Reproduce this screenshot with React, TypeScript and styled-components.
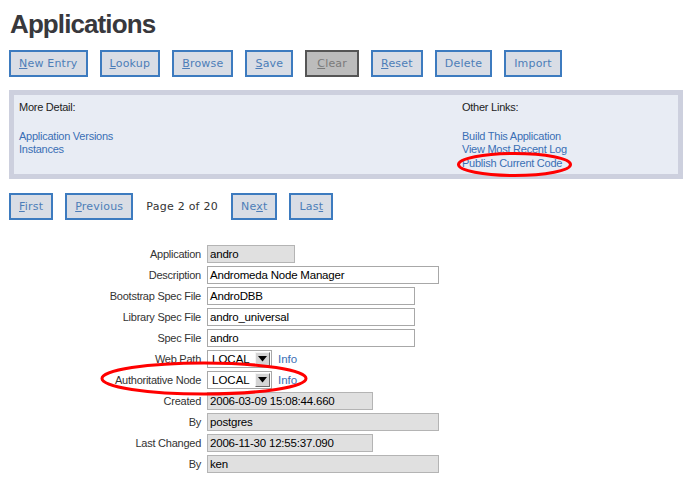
import React from "react";
import styled, { createGlobalStyle } from "styled-components";

const GlobalStyle = createGlobalStyle`
  html, body {
    margin: 0;
    padding: 0;
    background: #ffffff;
  }
  body {
    font-family: "Liberation Sans", Arial, sans-serif;
    color: #333333;
  }
`;

const Page = styled.div`
  position: relative;
  width: 683px;
  height: 493px;
  overflow: hidden;
  padding: 0 0 0 9px;
  box-sizing: border-box;
`;

const Title = styled.h1`
  margin: 0;
  padding: 9px 0 0 1px;
  font-family: "Liberation Sans", Arial, sans-serif;
  font-size: 26px;
  line-height: 30px;
  font-weight: 700;
  letter-spacing: -0.9px;
  color: #38383c;
`;

const ButtonBar = styled.div`
  display: flex;
  gap: 12px;
  margin-top: 11px;
`;

const PagerBar = styled.div`
  display: flex;
  align-items: center;
  gap: 12px;
  margin-top: 14px;
`;

const Button = styled.button<{ $disabled?: boolean }>`
  height: 27px;
  padding: 0 ${({ $disabled }) => ($disabled ? "10px" : "8px")};
  box-sizing: border-box;
  border: 2px solid ${({ $disabled }) => ($disabled ? "#555555" : "#3d7bbf")};
  background: ${({ $disabled }) => ($disabled ? "#bcbcbc" : "#d9dde5")};
  color: ${({ $disabled }) => ($disabled ? "#7a7a7a" : "#4d7db8")};
  font-family: "DejaVu Sans", Verdana, sans-serif;
  font-size: 11px;
  letter-spacing: 0.2px;
  cursor: pointer;
  & u {
    text-decoration: underline;
  }
`;

const PageInfo = styled.span`
  font-family: "DejaVu Sans", Verdana, sans-serif;
  font-size: 11px;
  letter-spacing: 0.25px;
  color: #333333;
  margin: 0 1px;
`;

const Panel = styled.section`
  margin-top: 13px;
  border: 5px solid #cdd0de;
  background: #e8ecf4;
  display: grid;
  grid-template-columns: 443px 1fr;
  padding: 6px 5px;
  height: 89px;
  box-sizing: border-box;
`;

const PanelCol = styled.div`
  display: flex;
  flex-direction: column;
  font-size: 11px;
  letter-spacing: -0.25px;
  line-height: 13.5px;
`;

const PanelHead = styled.div`
  color: #222222;
  margin-bottom: 15px;
`;

const PanelLink = styled.a`
  color: #3a6fb5;
  text-decoration: none;
`;

const Form = styled.div`
  display: grid;
  grid-template-columns: 192px auto;
  column-gap: 6px;
  row-gap: 3px;
  margin-top: 25px;
  align-items: center;
  justify-items: start;
`;

const Label = styled.label`
  justify-self: end;
  font-size: 11px;
  letter-spacing: -0.25px;
  color: #333333;
`;

const Field = styled.div<{ $w: number; $ro?: boolean }>`
  width: ${({ $w }) => $w}px;
  height: 18px;
  box-sizing: border-box;
  border: 1px solid ${({ $ro }) => ($ro ? "#b4b4b4" : "#a8a8a8")};
  background: ${({ $ro }) => ($ro ? "#e0e0e0" : "#ffffff")};
  font-size: 11.5px;
  letter-spacing: -0.2px;
  color: #000000;
  padding: 0 2px;
  line-height: 16px;
  white-space: nowrap;
  overflow: hidden;
`;

const SelectRow = styled.div`
  display: flex;
  align-items: center;
  gap: 6px;
`;

const Select = styled.div`
  width: 65px;
  height: 18px;
  box-sizing: border-box;
  border: 1px solid #a8a8a8;
  background: #ffffff;
  display: flex;
  align-items: center;
  justify-content: space-between;
  font-size: 11.5px;
  color: #000000;
  padding-left: 4px;
`;

const SelectArrow = styled.span`
  width: 15px;
  height: 14px;
  margin-right: 1px;
  box-sizing: border-box;
  background: #d4d4d4;
  border-top: 1px solid #f4f4f4;
  border-left: 1px solid #f4f4f4;
  border-right: 1px solid #6a6a6a;
  border-bottom: 1px solid #6a6a6a;
  display: flex;
  align-items: center;
  justify-content: center;
`;

const InfoLink = styled.a`
  font-size: 11.5px;
  color: #3a6fb5;
  text-decoration: none;
`;

const Marks = styled.svg`
  position: absolute;
  left: 0;
  top: 0;
  pointer-events: none;
`;

const topButtons: { key: string; rest: string; disabled?: boolean }[] = [
  { key: "N", rest: "ew Entry" },
  { key: "L", rest: "ookup" },
  { key: "B", rest: "rowse" },
  { key: "S", rest: "ave" },
  { key: "C", rest: "lear", disabled: true },
  { key: "R", rest: "eset" },
  { key: "", rest: "Delete" },
  { key: "", rest: "Import" },
];

function DropDown({ value }: { value: string }) {
  return (
    <Select>
      <span>{value}</span>
      <SelectArrow>
        <svg width="9" height="6" viewBox="0 0 9 6">
          <path d="M0 0H9L4.5 5.5Z" fill="#000" />
        </svg>
      </SelectArrow>
    </Select>
  );
}

export default function App() {
  return (
    <Page>
      <GlobalStyle />
      <Title>Applications</Title>
      <ButtonBar>
        {topButtons.map((b) => (
          <Button key={b.rest} $disabled={b.disabled}>
            {b.key && <u>{b.key}</u>}
            {b.rest}
          </Button>
        ))}
      </ButtonBar>

      <Panel>
        <PanelCol>
          <PanelHead>More Detail:</PanelHead>
          <PanelLink href="#">Application Versions</PanelLink>
          <PanelLink href="#">Instances</PanelLink>
        </PanelCol>
        <PanelCol>
          <PanelHead>Other Links:</PanelHead>
          <PanelLink href="#">Build This Application</PanelLink>
          <PanelLink href="#">View Most Recent Log</PanelLink>
          <PanelLink href="#">Publish Current Code</PanelLink>
        </PanelCol>
      </Panel>

      <PagerBar>
        <Button>
          <u>F</u>irst
        </Button>
        <Button>
          <u>P</u>revious
        </Button>
        <PageInfo>Page 2 of 20</PageInfo>
        <Button>
          Ne<u>x</u>t
        </Button>
        <Button>
          Las<u>t</u>
        </Button>
      </PagerBar>

      <Form>
        <Label>Application</Label>
        <Field $w={88} $ro>andro</Field>
        <Label>Description</Label>
        <Field $w={232}>Andromeda Node Manager</Field>
        <Label>Bootstrap Spec File</Label>
        <Field $w={208}>AndroDBB</Field>
        <Label>Library Spec File</Label>
        <Field $w={208}>andro_universal</Field>
        <Label>Spec File</Label>
        <Field $w={208}>andro</Field>
        <Label>Web Path</Label>
        <SelectRow>
          <DropDown value="LOCAL" />
          <InfoLink href="#">Info</InfoLink>
        </SelectRow>
        <Label>Authoritative Node</Label>
        <SelectRow>
          <DropDown value="LOCAL" />
          <InfoLink href="#">Info</InfoLink>
        </SelectRow>
        <Label>Created</Label>
        <Field $w={166} $ro>2006-03-09 15:08:44.660</Field>
        <Label>By</Label>
        <Field $w={232} $ro>postgres</Field>
        <Label>Last Changed</Label>
        <Field $w={166} $ro>2006-11-30 12:55:37.090</Field>
        <Label>By</Label>
        <Field $w={232} $ro>ken</Field>
      </Form>

      <Marks width="683" height="493" viewBox="0 0 683 493">
        <ellipse cx="514.5" cy="164.5" rx="56" ry="11" fill="none" stroke="#ff0000" strokeWidth="3" />
        <ellipse cx="204" cy="378.5" rx="102" ry="15.5" fill="none" stroke="#ff0000" strokeWidth="3" />
      </Marks>
    </Page>
  );
}
